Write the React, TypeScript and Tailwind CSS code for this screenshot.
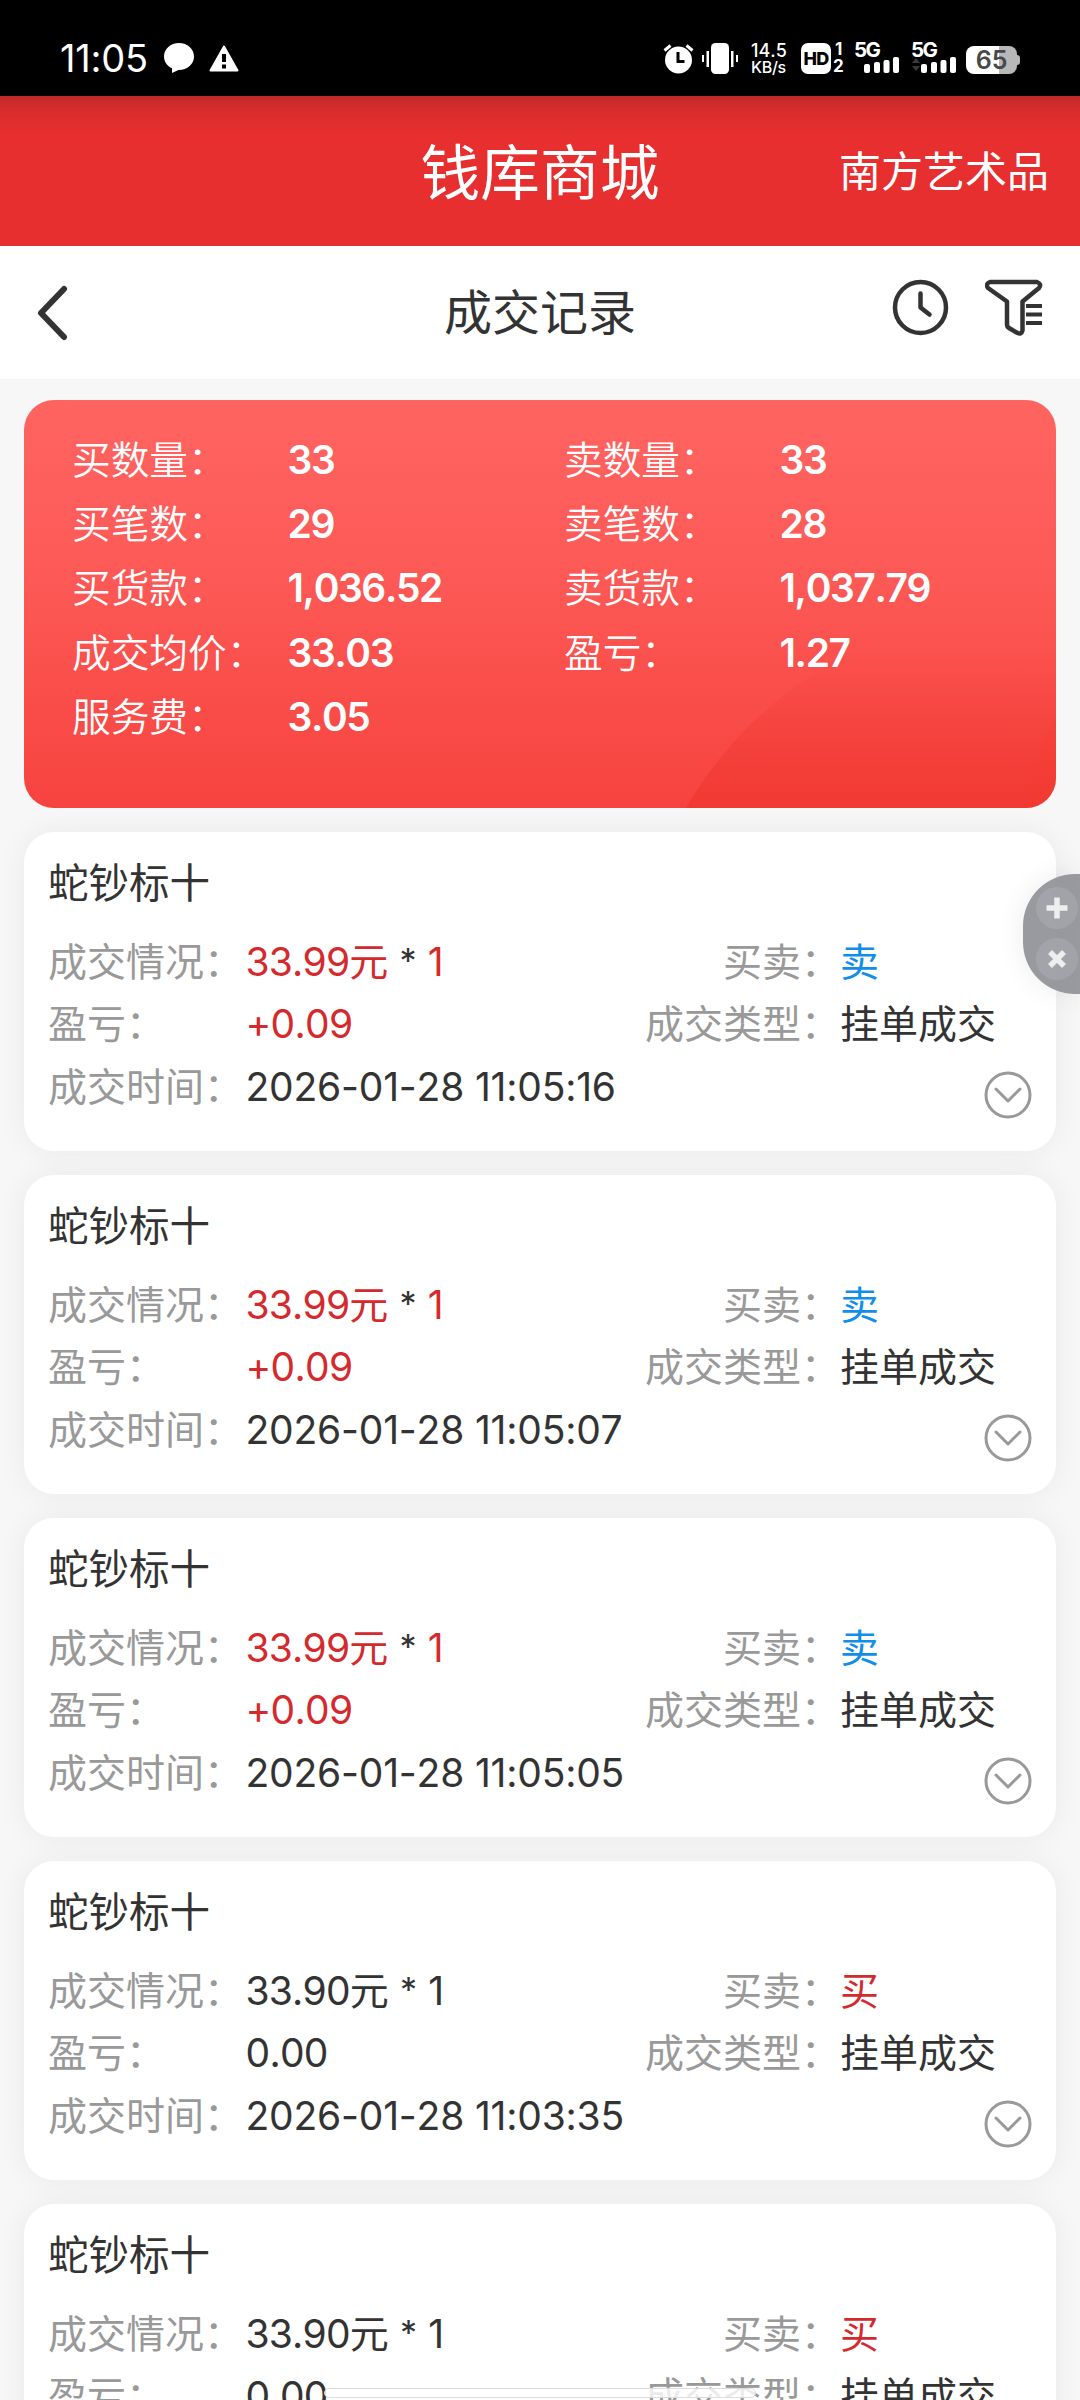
import React from "react";

type Trade = { price: string; profit: string; time: string; side: "卖" | "买" };

const trades: Trade[] = [
  { price: "33.99", profit: "+0.09", time: "2026-01-28 11:05:16", side: "卖" },
  { price: "33.99", profit: "+0.09", time: "2026-01-28 11:05:07", side: "卖" },
  { price: "33.99", profit: "+0.09", time: "2026-01-28 11:05:05", side: "卖" },
  { price: "33.90", profit: "0.00", time: "2026-01-28 11:03:35", side: "买" },
  { price: "33.90", profit: "0.00", time: "", side: "买" },
];

const summary: [string, string][] = [
  ["买数量：", "33"],
  ["卖数量：", "33"],
  ["买笔数：", "29"],
  ["卖笔数：", "28"],
  ["买货款：", "1,036.52"],
  ["卖货款：", "1,037.79"],
  ["成交均价：", "33.03"],
  ["盈亏：", "1.27"],
  ["服务费：", "3.05"],
];

function Signal({ roaming }: { roaming?: boolean }) {
  return (
    <div className="relative h-[30px] w-[45px]">
      <span className="absolute -top-[3px] -left-[1px] text-[20.500px] leading-[20px] font-bold tracking-[-1.5px]">5G</span>
      <svg className="absolute inset-0" width="45" height="30" viewBox="0 0 45 30" fill="#fff">
        {roaming && <path d="M0 20l4-5 4 5zM0 23h8l-4 5z" fill="#3a3a3a" />}
        <rect x="9" y="21" width="6" height="9" rx="2" />
        <rect x="19" y="19" width="6" height="11" rx="2" />
        <rect x="28.500" y="17" width="6" height="13" rx="2" />
        <rect x="38" y="14" width="6" height="16" rx="2" />
      </svg>
    </div>
  );
}

function StatusBar() {
  return (
    <div className="flex h-24 items-start bg-black text-white">
      <div className="mt-[39px] ml-[60px] w-[104px] text-[38px] leading-[38px] tracking-[-0.2px] whitespace-nowrap">11:05</div>
      <svg className="mt-[43px]" width="30" height="30" viewBox="0 0 30 30" fill="#fff">
        <path d="M15 0C6.500 0 0 6 0 13.500c0 5.300 3.200 9.700 8 11.800V30l6.500-3C23.500 27 30 21 30 13.500S23.500 0 15 0z" />
      </svg>
      <svg className="mt-[45px] ml-[15px]" width="30" height="27" viewBox="0 0 30 27">
        <path d="M15 1.500L28.500 25.500h-27z" fill="#fff" stroke="#fff" strokeWidth="2" strokeLinejoin="round" />
        <path d="M15 9v8M15 19.500v4" stroke="#000" strokeWidth="4" />
      </svg>
      <svg className="mt-[43px] ml-[424px]" width="31" height="31" viewBox="0 0 31 31">
        <circle cx="15.500" cy="17" r="13.500" fill="#fff" />
        <path d="M1.500 7.500l6-5M29.500 7.500l-6-5" stroke="#fff" strokeWidth="3" />
        <path d="M15 9v9.500h6.500" fill="none" stroke="#000" strokeWidth="3" />
      </svg>
      <svg className="mt-[43px] ml-[8px]" width="36" height="31" viewBox="0 0 36 31" fill="#fff">
        <rect x="9" y="0" width="18" height="31" rx="4.500" />
        <rect x="4.500" y="8" width="2.500" height="16" />
        <rect x="0" y="12" width="2" height="7" />
        <rect x="29" y="8" width="2.500" height="16" />
        <rect x="34" y="12" width="2" height="7" />
      </svg>
      <div className="mt-[42px] ml-[13px] flex w-[50px] flex-col whitespace-nowrap">
        <span className="text-[18px] leading-[17px] font-medium">14.5</span>
        <span className="text-[16px] leading-[16px] font-medium tracking-[-0.3px]">KB/s</span>
      </div>
      <div className="mt-[43px] flex h-[31px] w-[30px] items-center justify-center rounded-[7px] bg-white text-[18px] leading-none font-extrabold tracking-[-0.8px] text-black">
        HD
      </div>
      <div className="mt-[41px] ml-[2px] flex w-[22px] flex-col text-[17px] leading-[17px] font-bold">
        <span className="ml-[2px]">1</span>
        <span>2</span>
      </div>
      <div className="mt-[43px] flex">
        <Signal />
        <div className="w-3" />
        <Signal roaming />
      </div>
      <div className="relative mt-[46px] ml-[9px] flex h-[28px] w-[55px] items-center">
        <div className="flex h-full w-[51px] items-center justify-center rounded-[8px] bg-[linear-gradient(90deg,#fff_33px,#b8b8b8_33px)] text-[25px] leading-none font-semibold text-[#484848]">
          65
        </div>
        <div className="h-[10px] w-[3px] rounded-r-[3px] bg-[#b8b8b8]" />
      </div>
    </div>
  );
}

function Header() {
  return (
    <header className="grid h-[150px] grid-cols-[1fr_auto_1fr] items-center bg-[linear-gradient(180deg,#bd2a29_0px,#cf2b2b_8px,#dd2d2d_20px,#e72f2f_40px)] text-white">
      <div />
      <h1 className="pt-[4px] text-[59.700px] leading-[80px]">钱库商城</h1>
      <div className="pt-[2px] pr-[31px] text-right text-[42px] leading-[60px]">南方艺术品</div>
    </header>
  );
}

function NavBar() {
  return (
    <nav className="grid h-[134px] grid-cols-[1fr_auto_1fr] items-center border-b border-[#f4f4f4] bg-white text-[#333]">
      <svg className="ml-[37px]" width="32" height="56" viewBox="0 0 32 56">
        <path d="M27 4L4 28l23 24" fill="none" stroke="#333" strokeWidth="6" strokeLinecap="round" strokeLinejoin="round" />
      </svg>
      <h2 className="pt-[1px] text-[48px] leading-[64px]">成交记录</h2>
      <div className="flex items-center justify-end gap-[36px] pr-[37px] pb-[11px]">
        <svg width="57" height="57" viewBox="0 0 57 57" fill="none" stroke="#333" strokeWidth="4.500" strokeLinecap="round" strokeLinejoin="round">
          <circle cx="28.500" cy="28.500" r="25.500" />
          <path d="M28.500 14.500v14l9 7" />
        </svg>
        <svg width="58" height="57" viewBox="0 0 58 57" fill="none" stroke="#333" strokeWidth="4.500" strokeLinejoin="round">
          <path d="M5 3h47q5 2 2 6L37.500 22.500v29q-1 4-5 2.500L24 49q-2-1-2-4V22.500L3 9Q0 5 5 3z" />
          <path d="M41 27h16M41 35.500h16M41 44h16" strokeWidth="4" />
        </svg>
      </div>
    </nav>
  );
}

function SummaryCard() {
  return (
    <section className="relative mx-6 mt-5 h-[408px] overflow-hidden rounded-[30px] bg-[linear-gradient(180deg,#ff6461,#fd5b58_38%,#f7433f)] text-white">
      <svg className="absolute inset-0" width="1032" height="408" viewBox="0 0 1032 408">
        <defs>
          <linearGradient id="arc" gradientUnits="userSpaceOnUse" x1="0" y1="250" x2="0" y2="408">
            <stop offset="0" stopColor="#ea2d22" stopOpacity="0" />
            <stop offset="1" stopColor="#ea2d22" stopOpacity="0.450" />
          </linearGradient>
        </defs>
        <circle cx="1010" cy="611" r="403" fill="url(#arc)" />
        <circle cx="1370" cy="490" r="380" fill="#f43a2c" opacity="0.200" />
      </svg>
      <div className="relative grid auto-rows-[64.200px] grid-cols-2 pt-[28px] pl-12">
        {summary.map(([label, value]) => (
          <div key={label} className="flex items-center">
            <span className="w-[215.500px] text-[38.700px] leading-[64px] font-[350]">{label}</span>
            <span className="text-[39px] leading-[64px] font-semibold tracking-[-1.4px]">{value}</span>
          </div>
        ))}
      </div>
    </section>
  );
}

function TradeCard({ trade }: { trade: Trade }) {
  const gain = trade.side === "卖";
  return (
    <article className="relative h-[319px] shrink-0 rounded-[30px] bg-white pt-[22px] pl-6 text-[#333] shadow-[0_0_30px_rgba(0,0,0,0.06)]">
      <h3 className="text-[40.500px] leading-[60px]">蛇钞标十</h3>
      <div className="mt-[17px] grid auto-rows-[62.300px] grid-cols-[197.500px_auto_1fr_216px] text-[39px] leading-[62px] whitespace-nowrap">
        <span className="text-[#999]">成交情况：</span>
        <span className={gain ? "tracking-[-0.8px] text-[#d42a2e]" : "tracking-[-0.8px]"}>
          {trade.price}元<span className="px-[12px] align-[3px] text-[34px] leading-none text-[#333]">*</span>1
        </span>
        <span className="text-right text-[#999]">买卖：</span>
        <span className={gain ? "text-[#108ee9]" : "text-[#d42a2e]"}>{trade.side}</span>

        <span className="text-[#999]">盈亏：</span>
        <span className={gain ? "tracking-[-0.7px] text-[#d42a2e]" : "tracking-[-0.7px]"}>{trade.profit}</span>
        <span className="text-right text-[#999]">成交类型：</span>
        <span>挂单成交</span>

        <span className="text-[#999]">成交时间：</span>
        <span className="col-span-3 tracking-[-0.2px]">{trade.time}</span>
      </div>
      <svg className="absolute right-[24px] bottom-[32px]" width="48" height="48" viewBox="0 0 48 48" fill="none" stroke="#999" strokeWidth="3" strokeLinecap="round" strokeLinejoin="round">
        <circle cx="24" cy="24" r="22" />
        <path d="M12 18l12 12 12-12" />
      </svg>
    </article>
  );
}

function FloatingTool() {
  return (
    <div className="absolute top-[874px] right-0 flex h-[120px] w-[57px] flex-col items-center justify-center gap-[9px] rounded-l-[52px] bg-[#8d8f95]/90 pb-[2px] pl-[11px] shadow-[0_0_28px_rgba(0,0,0,0.08)]">
      {[0, 45].map((angle) => (
        <div key={angle} className="flex size-[42px] items-center justify-center rounded-full bg-white/10">
          <svg width="24" height="24" viewBox="-12 -12 24 24" stroke="#eee" strokeWidth="5.500">
            <path d={angle ? "M-7 -7L7 7M7 -7L-7 7" : "M-10.500 0h21M0 -10.500v21"} />
          </svg>
        </div>
      ))}
    </div>
  );
}

export default function App() {
  return (
    <main className="relative h-[2400px] w-[1080px] overflow-hidden bg-[#f7f7f7] font-['Inter','Noto_Sans_CJK_SC',sans-serif] [font-kerning:none]">
      <StatusBar />
      <Header />
      <NavBar />
      <SummaryCard />
      <div className="flex flex-col gap-6 px-6 pt-6">
        {trades.map((trade, i) => (
          <TradeCard key={i} trade={trade} />
        ))}
      </div>
      <FloatingTool />
      <div className="absolute top-[2388px] left-[324px] h-[10px] w-[432px] rounded-full border border-[#dcdcdc] bg-white/80" />
    </main>
  );
}
